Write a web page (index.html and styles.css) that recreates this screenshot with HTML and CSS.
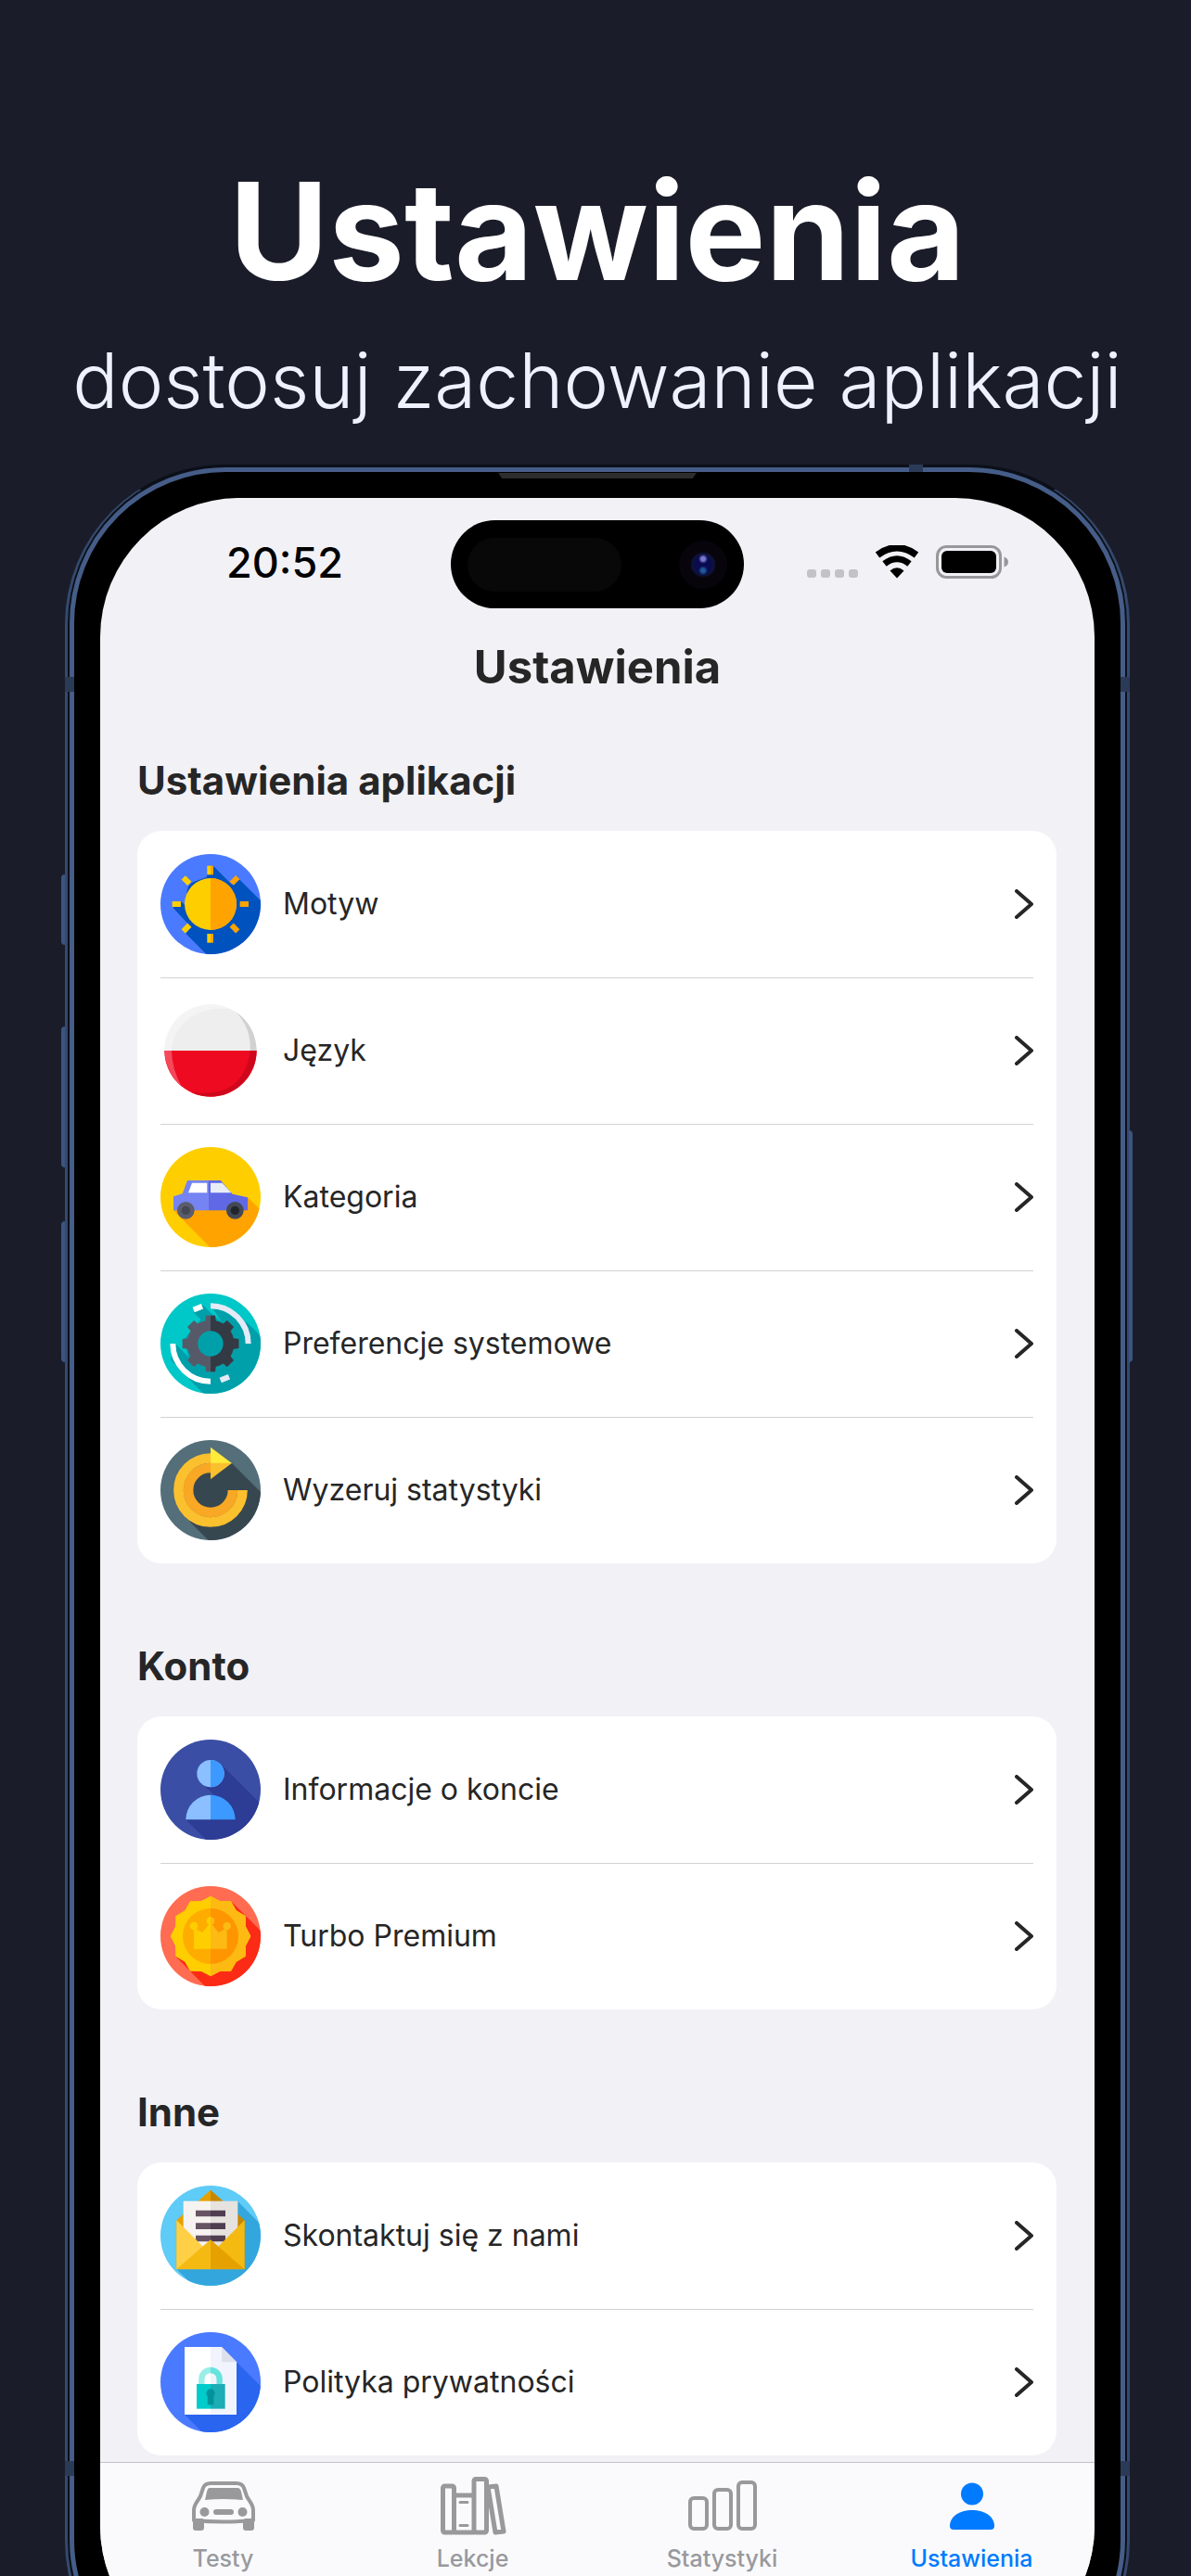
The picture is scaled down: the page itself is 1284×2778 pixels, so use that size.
FILE: index.html
```
<!DOCTYPE html>
<html lang="pl">
<head>
  <meta charset="UTF-8" />
  <meta name="viewport" content="width=device-width, initial-scale=1.0" />
  <title>Ustawienia</title>
  <link rel="stylesheet" href="styles.css">
</head>
<body>
<div class="page">
  <header class="promo">
    <h1>Ustawienia</h1>
    <p>dostosuj zachowanie aplikacji</p>
  </header>

  <div class="phone">
    <span class="side-button left action"></span>
    <span class="side-button left volume-up"></span>
    <span class="side-button left volume-down"></span>
    <span class="side-button right power"></span>
    <span class="antenna top"></span>
    <span class="antenna left"></span>
    <span class="antenna right"></span>
    <span class="antenna left low"></span>
    <span class="antenna right low"></span>

    <div class="bezel">
      <span class="speaker"></span>
      <div class="screen">
        <div class="status-bar">
          <div class="time">20:52</div>
          <div class="island">
            <span class="sensor"></span>
            <span class="camera"></span>
          </div>
          <div class="status-icons">
            <svg width="55" height="36" viewBox="0 0 55 36" fill="#c3c3c6">
              <rect x="0" y="26" width="10" height="9" rx="3" />
              <rect x="15" y="26" width="10" height="9" rx="3" />
              <rect x="30" y="26" width="10" height="9" rx="3" />
              <rect x="45" y="26" width="10" height="9" rx="3" />
            </svg>
            <svg width="48" height="36" viewBox="0 0 48 36">
              <path d="M3 10.500Q24 -5 45 10.500" fill="none" stroke="#000" stroke-width="7.500" />
              <path d="M10.500 20Q24 9.500 37.500 20" fill="none" stroke="#000" stroke-width="7" />
              <path d="M24 35.500L16.500 27.500Q24 21 31.500 27.500Z" />
            </svg>
            <svg width="79" height="36" viewBox="0 0 79 36">
              <rect x="1.500" y="1.500" width="68" height="33" rx="10" fill="none" stroke="#98989b" stroke-width="3" />
              <rect x="6" y="6" width="59" height="24" rx="6" />
              <path d="M73.500 12.500Q78 14 78 18T73.500 23.500Z" fill="#98989b" />
            </svg>
          </div>
        </div>

        <h2 class="screen-title">Ustawienia</h2>

        <main class="content">
          <section>
            <h3>Ustawienia aplikacji</h3>
            <ul class="card">
              <li><a href="#">
                <svg class="icon" viewBox="0 0 324 324">
                  <defs>
                    <clipPath id="disc"><circle cx="162" cy="162" r="162" /></clipPath>
                    <clipPath id="rightHalf"><rect x="162" y="0" width="162" height="324" /></clipPath>
                  </defs>
                  <g clip-path="url(#disc)">
                    <rect width="324" height="324" fill="#4a7aff" />
                    <path d="M172 40L230 98L255 82L324 151V324H148L82 257L99 236L40 173L66 153L78 164L86 120L90 104L102 92L150 74V67Z" fill="#0052be" />
                  </g>
                  <circle cx="162" cy="162" r="84" fill="#ffce00" />
                  <path d="M162 78A84 84 0 0 1 162 246Z" fill="#ffa300" />
                  <g fill="#ffce00">
                    <rect x="151" y="38" width="11" height="29" />
                    <rect x="151" y="258" width="11" height="29" />
                    <rect x="38" y="153" width="28" height="18" />
                    <rect x="70" y="77" width="28" height="18" transform="rotate(45 84 86)" />
                    <rect x="70" y="231" width="28" height="18" transform="rotate(-45 84 240)" />
                  </g>
                  <g fill="#ffa300">
                    <rect x="162" y="38" width="9" height="29" />
                    <rect x="162" y="258" width="9" height="29" />
                    <rect x="257" y="153" width="28" height="18" />
                    <rect x="226" y="76" width="28" height="18" transform="rotate(-45 240 85)" />
                    <rect x="226" y="231" width="28" height="18" transform="rotate(45 240 240)" />
                  </g>
                </svg>
                <span>Motyw</span>
                <svg class="chevron" viewBox="0 0 20 32"><path d="M2 2L18 16L2 30" /></svg>
              </a></li>
              <li><a href="#">
                <svg class="icon" viewBox="0 0 324 324">
                  <path d="M13 162A149 149 0 0 1 311 162Z" fill="#eee" />
                  <path d="M13 162A149 149 0 0 0 311 162Z" fill="#ee0a20" />
                  <path d="M13 162A149 149 0 0 1 225 27C130 15 40 70 36 162Z" fill="#f4f4f4" />
                  <path d="M13 162Q16 230 69 279Q38 226 36 162Z" fill="#f5485b" />
                  <path d="M244 37Q308 82 311 162H290Q294 90 244 37Z" fill="#d2d0d1" />
                  <path d="M311 162A149 149 0 0 1 100 297Q270 318 290 162Z" fill="#d0071c" />
                </svg>
                <span>Język</span>
                <svg class="chevron" viewBox="0 0 20 32"><path d="M2 2L18 16L2 30" /></svg>
              </a></li>
              <li><a href="#">
                <svg class="icon" viewBox="0 0 324 324">
                  <g clip-path="url(#disc)">
                    <rect width="324" height="324" fill="#ffce00" />
                    <path d="M282 163L324 204V324H160L42 205Z" fill="#ffa300" />
                  </g>
                  <path d="M42 160L71 151L87 108H156V205H42Z" fill="#7584f2" />
                  <path d="M156 108H195L233 152L282 163V205H156Z" fill="#6068e6" />
                  <path d="M102 116H151V148H90Z" fill="#fff" />
                  <path d="M162 116H200L229 148H162Z" fill="#e8edf5" />
                  <circle cx="82" cy="205" r="28" fill="#5b5d6d" />
                  <circle cx="82" cy="205" r="14" fill="#434854" />
                  <circle cx="241" cy="205" r="28" fill="#434854" />
                  <circle cx="241" cy="205" r="14" fill="#22262b" />
                </svg>
                <span>Kategoria</span>
                <svg class="chevron" viewBox="0 0 20 32"><path d="M2 2L18 16L2 30" /></svg>
              </a></li>
              <li><a href="#">
                <svg class="icon" viewBox="0 0 324 324">
                  <defs>
                    <g id="gear">
                      <circle cx="162" cy="162" r="76" />
                      <path id="teeth" d="M144 100L147 71H177L180 100V224L177 253H147L144 224Z" />
                      <use href="#teeth" transform="rotate(45 162 162)" />
                      <use href="#teeth" transform="rotate(90 162 162)" />
                      <use href="#teeth" transform="rotate(135 162 162)" />
                    </g>
                  </defs>
                  <g clip-path="url(#disc)">
                    <rect width="324" height="324" fill="#00c8c8" />
                    <path d="M106 60L137 37L166 66L198 92L170 50H230L292 105L324 138V324H138L34 215L49 163L92 206L74 150L130 84Z" fill="#00a0aa" />
                  </g>
                  <path d="M40 162A122 122 0 0 0 162 284" fill="none" stroke="#fff" stroke-width="18" />
                  <path d="M162 40A122 122 0 0 1 284 162" fill="none" stroke="#e6eaf6" stroke-width="18" />
                  <rect x="106" y="38" width="30" height="18" fill="#fff" transform="rotate(-22 121 47)" />
                  <rect x="193" y="266" width="30" height="18" fill="#e6eaf6" transform="rotate(-22 208 275)" />
                  <use href="#gear" fill="#565a68" />
                  <g clip-path="url(#rightHalf)"><use href="#gear" fill="#333a44" /></g>
                  <circle cx="162" cy="162" r="41" fill="#00a0aa" />
                </svg>
                <span>Preferencje systemowe</span>
                <svg class="chevron" viewBox="0 0 20 32"><path d="M2 2L18 16L2 30" /></svg>
              </a></li>
              <li><a href="#">
                <svg class="icon" viewBox="0 0 324 324">
                  <g clip-path="url(#disc)">
                    <rect width="324" height="324" fill="#546e7a" />
                    <path d="M231 75L324 168V324H155L94 263L90 162Z" fill="#37474f" />
                  </g>
                  <circle cx="162" cy="162" r="60" fill="#37474f" />
                  <path d="M162 58.500A103.500 103.500 0 1 0 265.500 162" fill="none" stroke="#fbc02d" stroke-width="32" />
                  <path d="M162 90A72 72 0 1 0 234 162" fill="none" stroke="#f9a825" stroke-width="32" />
                  <path d="M162 23L231 75H162Z" fill="#ffeb3b" />
                  <path d="M162 74H231L162 127Z" fill="#fbc02d" />
                </svg>
                <span>Wyzeruj statystyki</span>
                <svg class="chevron" viewBox="0 0 20 32"><path d="M2 2L18 16L2 30" /></svg>
              </a></li>
            </ul>
          </section>

          <section>
            <h3>Konto</h3>
            <ul class="card">
              <li><a href="#">
                <svg class="icon" viewBox="0 0 324 324">
                  <g clip-path="url(#disc)">
                    <rect width="324" height="324" fill="#3a4ea5" />
                    <path d="M200 84L324 208V324H147L82 259L185 190L140 148Z" fill="#2d3c94" />
                  </g>
                  <circle cx="162" cy="110" r="44" fill="#8bbfff" />
                  <path d="M162 66A44 44 0 0 1 162 154Z" fill="#3c99ff" />
                  <path d="M82 259A80 80 0 0 1 162 179V259Z" fill="#8bbfff" />
                  <path d="M162 179A80 80 0 0 1 242 259H162Z" fill="#3c99ff" />
                </svg>
                <span>Informacje o koncie</span>
                <svg class="chevron" viewBox="0 0 20 32"><path d="M2 2L18 16L2 30" /></svg>
              </a></li>
              <li><a href="#">
                <svg class="icon" viewBox="0 0 324 324">
                  <defs>
                    <path id="seal" d="M162 32L192 48L228 49L245 79L275 97L276 131L292 162L276 193L275 227L245 245L228 275L192 276L162 292L132 276L96 275L79 245L49 227L48 193L32 162L48 131L49 97L79 79L96 49L132 48Z" />
                    <g id="crown">
                      <circle cx="108" cy="129" r="13" />
                      <circle cx="162" cy="113" r="13" />
                      <circle cx="215" cy="129" r="13" />
                      <path d="M108 134L135 151L155 126H169L188 151L215 134V203H108Z" />
                    </g>
                  </defs>
                  <g clip-path="url(#disc)">
                    <rect width="324" height="324" fill="#ff6c51" />
                    <path d="M228 49L324 145V324H144L49 227Z" fill="#fb2b15" />
                  </g>
                  <use href="#seal" fill="#ffce00" />
                  <circle cx="162" cy="162" r="90" fill="#ffac00" />
                  <use href="#crown" fill="#ffce00" />
                  <g clip-path="url(#rightHalf)">
                    <use href="#seal" fill="#fdba12" />
                    <circle cx="162" cy="162" r="90" fill="#ff9500" />
                    <use href="#crown" fill="#fdba12" />
                  </g>
                </svg>
                <span>Turbo Premium</span>
                <svg class="chevron" viewBox="0 0 20 32"><path d="M2 2L18 16L2 30" /></svg>
              </a></li>
            </ul>
          </section>

          <section>
            <h3>Inne</h3>
            <ul class="card">
              <li><a href="#">
                <svg class="icon" viewBox="0 0 324 324">
                  <g clip-path="url(#disc)">
                    <rect width="324" height="324" fill="#5fcbf7" />
                    <path d="M250 51L324 125V324H106L52 270Z" fill="#33a7dd" />
                  </g>
                  <path d="M52 112L162 14V270H52Z" fill="#e5a100" />
                  <path d="M162 14L272 112V270H162Z" fill="#c88700" />
                  <rect x="74" y="50" width="88" height="160" fill="#f6f3f0" />
                  <rect x="162" y="50" width="88" height="160" fill="#e6e2de" />
                  <path d="M114 80H162V100H114ZM114 121H162V141H114ZM114 161H162V181H114Z" fill="#665463" />
                  <path d="M162 80H210V100H162ZM162 121H210V141H162ZM162 161H210V181H162Z" fill="#4f3d50" />
                  <path d="M52 112L145 205L52 271Z" fill="#ffd045" />
                  <path d="M272 112L179 205L272 271Z" fill="#f5ba12" />
                  <path d="M162 175L52 271H162Z" fill="#f5ba12" />
                  <path d="M162 175L272 271H162Z" fill="#e5a100" />
                </svg>
                <span>Skontaktuj się z nami</span>
                <svg class="chevron" viewBox="0 0 20 32"><path d="M2 2L18 16L2 30" /></svg>
              </a></li>
              <li><a href="#">
                <svg class="icon" viewBox="0 0 324 324">
                  <g clip-path="url(#disc)">
                    <rect width="324" height="324" fill="#4a7aff" />
                    <path d="M246 97L324 175V324H135L78 267Z" fill="#2a65f0" />
                  </g>
                  <path d="M78 48H162V267H78Z" fill="#fff" />
                  <path d="M162 48H198L246 97V267H162Z" fill="#f1f4fd" />
                  <path d="M198 48L246 97H198Z" fill="#dde1ec" />
                  <path d="M133 168V152A29 29 0 0 1 162 123" fill="none" stroke="#99eee8" stroke-width="19" />
                  <path d="M162 123A29 29 0 0 1 191 152V168" fill="none" stroke="#66e3dc" stroke-width="19" />
                  <rect x="117" y="168" width="45" height="80" fill="#00cccc" />
                  <rect x="162" y="168" width="47" height="80" fill="#1cadb5" />
                  <circle cx="162" cy="198" r="14" fill="#00939b" />
                  <rect x="152" y="200" width="20" height="35" fill="#00939b" />
                </svg>
                <span>Polityka prywatności</span>
                <svg class="chevron" viewBox="0 0 20 32"><path d="M2 2L18 16L2 30" /></svg>
              </a></li>
            </ul>
          </section>
        </main>

        <nav class="tab-bar">
          <a href="#">
            <svg width="72" height="64" viewBox="0 0 72 64" fill="currentColor">
              <path d="M4 48V37C4 31 8 28 11 22L14 13Q16 8 22 8H50Q56 8 58 13L61 22C64 28 68 31 68 37V48Q36 51 4 48Z" fill="none" stroke="currentColor" stroke-width="4" stroke-linejoin="round" />
              <path d="M21 13H51Q54 13 55 17L57 26Q36 24 16 26L18 17Q19 13 21 13Z" />
              <circle cx="15.500" cy="39" r="5" />
              <circle cx="56.500" cy="39" r="5" />
              <rect x="25" y="36" width="22" height="6" rx="3" />
              <rect x="3" y="46" width="12" height="13" rx="3" />
              <rect x="57" y="46" width="12" height="13" rx="3" />
            </svg>
            <span>Testy</span>
          </a>
          <a href="#">
            <svg width="72" height="64" viewBox="0 0 72 64" fill="none" stroke="currentColor" stroke-width="5" stroke-linejoin="round">
              <rect x="3.500" y="11" width="12" height="50" rx="2" />
              <path d="M15.500 21H37M15.500 61H37" />
              <rect x="37" y="3.500" width="13.500" height="57.500" rx="2" />
              <path d="M52 12L61 11L69 60L60 61Z" />
              <path d="M22 28.500H30M22 53.500H30" stroke-width="3" stroke-linecap="round" />
            </svg>
            <span>Lekcje</span>
          </a>
          <a href="#">
            <svg width="74" height="64" viewBox="0 0 74 64" fill="none" stroke="currentColor" stroke-width="4">
              <rect x="2" y="24" width="18" height="33" rx="4" />
              <rect x="28" y="15" width="18" height="42" rx="4" />
              <rect x="54" y="7" width="18" height="50" rx="4" />
            </svg>
            <span>Statystyki</span>
          </a>
          <a href="#" class="active">
            <svg width="72" height="64" viewBox="0 0 72 64" fill="currentColor">
              <circle cx="36" cy="19.500" r="12" />
              <path d="M12 54C12 44 22 37 36 37S60 44 60 54Q60 58 56 58H16Q12 58 12 54Z" />
            </svg>
            <span>Ustawienia</span>
          </a>
        </nav>
      </div>
    </div>
  </div>
</div>
</body>
</html>
```
FILE: styles.css
```
:root {
  --bg-color: #1a1d29;
  --screen-bg: #f2f1f6;
  --text-color: #262626;
  --frame: #455d88;
  --frame-dark: #34496e;
  --muted: #99999c;
  --accent: #007aff;
}

* {
  box-sizing: border-box;
}

body {
  margin: 0;
  background-color: var(--bg-color);
  color: var(--text-color);
  font-family: Inter, "Noto Sans", sans-serif;
}

/* the phone runs off the bottom edge of the window */
.page {
  height: 100vh;
  overflow: hidden;
  padding: 169px 66px 0 70px;
}

.promo {
  text-align: center;
  white-space: nowrap;
  margin: 0 -40px 40px;
}

.promo h1 {
  margin: 0 0 32px;
  font-size: 146px;
  line-height: 160px;
  font-weight: 700;
  color: #ffffff;
}

.promo p {
  margin: 0;
  font-size: 82px;
  line-height: 100px;
  font-weight: 300;
  color: #eef2ff;
}

/* Phone frame */
.phone {
  position: relative;
  border: 3px solid var(--frame-dark);
  border-top: 1px solid #0b0f18;
  border-radius: 172px;
  padding: 2px;
  background-color: #0c1018;
}

.bezel {
  position: relative;
  border: 5px solid var(--frame);
  border-radius: 168px;
  padding: 28px;
  background-color: #000000;
}

.side-button {
  position: absolute;
  width: 4px;
  background-color: #3c5480;
}

.side-button.left {
  left: -7px;
  border-radius: 4px 0 0 4px;
}

.side-button.right {
  right: -6px;
  border-radius: 0 4px 4px 0;
}

.action {
  top: 441px;
  height: 76px;
}

.volume-up {
  top: 605px;
  height: 152px;
}

.volume-down {
  top: 815px;
  height: 152px;
}

.power {
  top: 717px;
  height: 250px;
}

.antenna {
  position: absolute;
  z-index: 1;
  width: 10px;
  height: 16px;
  top: 228px;
  background-color: #2b3a56;
}

.antenna.left {
  left: -3px;
}

.antenna.right {
  right: -3px;
}

.antenna.top {
  top: -1px;
  right: 220px;
  width: 15px;
  height: 8px;
}

.antenna.low {
  top: 2152px;
}

.speaker {
  position: absolute;
  top: 1px;
  left: 50%;
  width: 214px;
  height: 6px;
  margin-left: -107px;
  background-color: #2d2d2d;
  clip-path: polygon(0 0, 100% 0, 98% 100%, 2% 100%);
}

.screen {
  border-radius: 150px;
  overflow: hidden;
  padding-top: 24px;
  background-color: var(--screen-bg);
}

/* Status bar */
.status-bar {
  display: grid;
  grid-template-columns: 1fr 316px 1fr;
  align-items: center;
}

.time {
  padding: 0 0 4px 20px;
  text-align: center;
  font-size: 45px;
  line-height: 48px;
  font-weight: 500;
  color: #000000;
}

.island {
  display: flex;
  align-items: center;
  justify-content: space-between;
  height: 95px;
  padding: 0 18px;
  border-radius: 48px;
  background-color: #000000;
}

.sensor {
  width: 166px;
  height: 58px;
  border-radius: 29px;
  background-color: #080808;
}

.camera {
  width: 52px;
  height: 52px;
  border-radius: 50%;
  background: radial-gradient(circle at 50% 38%, #7a7ad0 0 2px, transparent 5px), radial-gradient(circle at 50% 62%, #1d5a9a 0 2px, transparent 5px), radial-gradient(circle, #0a0a50 0 8px, #0d1338 12px, #07050b 14px);
}

.status-icons {
  display: flex;
  justify-content: center;
  align-items: flex-end;
  gap: 18px;
  padding: 0 24px 6px 0;
}

.screen-title {
  margin: 34px 0 66px;
  text-align: center;
  font-size: 49px;
  line-height: 60px;
  font-weight: 700;
}

/* Settings list */
.content {
  display: flex;
  flex-direction: column;
  gap: 85px;
  padding: 0 41px 7px 40px;
}

.content h3 {
  margin: 0 0 28px;
  font-size: 42px;
  line-height: 52px;
  font-weight: 700;
}

.card {
  margin: 0;
  padding: 0 25px;
  list-style: none;
  border-radius: 26px;
  background-color: #ffffff;
}

.card li + li {
  border-top: 1px solid #d2d2d4;
}

.card a {
  display: flex;
  align-items: center;
  gap: 24px;
  padding: 25px 0;
  color: var(--text-color);
  text-decoration: none;
  font-size: 32px;
  line-height: 40px;
  font-weight: 400;
}

.card li + li a {
  padding-top: 24px;
}

.card a span {
  flex: 1;
}

.icon {
  width: 108px;
  height: 108px;
}

.chevron {
  width: 20px;
  height: 32px;
  fill: none;
  stroke: var(--text-color);
  stroke-width: 4;
  stroke-linecap: round;
  stroke-linejoin: round;
}

/* Bottom tabs */
.tab-bar {
  display: grid;
  grid-template-columns: repeat(4, 1fr);
  margin: 0 -2px;
  padding: 14px 0 100px;
  border-top: 1px solid #c3c3c6;
  background-color: #fafafc;
}

.tab-bar a {
  display: flex;
  flex-direction: column;
  align-items: center;
  gap: 10px;
  color: var(--muted);
  text-decoration: none;
  font-size: 25px;
  line-height: 30px;
  font-weight: 500;
}

.tab-bar a.active {
  color: var(--accent);
}
```
